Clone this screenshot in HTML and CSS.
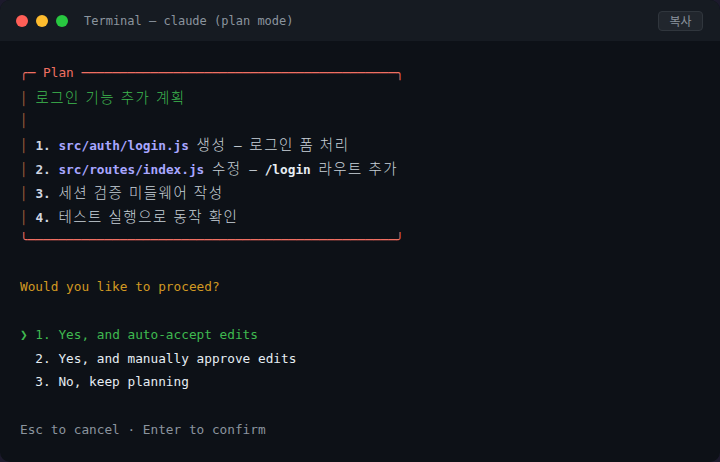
FILE: index.html
```html
<!DOCTYPE html>
<html lang="ko">
<head>
<meta charset="utf-8">
<title>Terminal — claude (plan mode)</title>
<link rel="stylesheet" href="styles.css">
</head>
<body>
<div class="window">
  <div class="titlebar">
    <div class="dots">
      <span class="dot red"></span>
      <span class="dot yellow"></span>
      <span class="dot green"></span>
    </div>
    <div class="title">Terminal — claude (plan mode)</div>
    <button class="copy">복사</button>
  </div>
  <div class="term">
    <div class="line box-edge">╭─ <span class="plan-label">Plan</span> ─────────────────────────────────────────╮</div>
    <div class="line"><span class="bar">│</span> <span class="ko heading">로그인 기능 추가 계획</span></div>
    <div class="line"><span class="bar">│</span></div>
    <div class="line"><span class="bar">│</span> <b class="num">1.</b> <b class="path">src/auth/login.js</b> <span class="ko">생성</span> — <span class="ko">로그인 폼 처리</span></div>
    <div class="line"><span class="bar">│</span> <b class="num">2.</b> <b class="path">src/routes/index.js</b> <span class="ko">수정</span> — <b class="route">/login</b> <span class="ko">라우트 추가</span></div>
    <div class="line"><span class="bar">│</span> <b class="num">3.</b> <span class="ko">세션 검증 미들웨어 작성</span></div>
    <div class="line"><span class="bar">│</span> <b class="num">4.</b> <span class="ko">테스트 실행으로 동작 확인</span></div>
    <div class="line box-edge">╰────────────────────────────────────────────────╯</div>
    <div class="line blank"></div>
    <div class="line question">Would you like to proceed?</div>
    <div class="line blank"></div>
    <div class="line option selected"><span class="caret">❯</span> 1. Yes, and auto-accept edits</div>
    <div class="line option">  2. Yes, and manually approve edits</div>
    <div class="line option">  3. No, keep planning</div>
    <div class="line blank"></div>
    <div class="line hint">Esc to cancel · Enter to confirm</div>
  </div>
</div>
</body>
</html>
```

FILE: styles.css
```css
html, body {
  margin: 0;
  padding: 0;
  background: #1c1a2c;
}

.window {
  width: 720px;
  height: 462px;
  border-radius: 10px;
  overflow: hidden;
  background: #0d1117;
  display: flex;
  flex-direction: column;
}

.titlebar {
  height: 41px;
  flex: none;
  background: #161b22;
  display: flex;
  align-items: center;
  padding: 0 17px 0 16px;
  box-sizing: border-box;
}

.dots {
  display: flex;
  gap: 8px;
}

.dot {
  width: 12px;
  height: 12px;
  border-radius: 50%;
  display: block;
}
.dot.red { background: #ff5f57; }
.dot.yellow { background: #febc2e; }
.dot.green { background: #28c840; }

.title {
  margin-left: 16px;
  font-family: "DejaVu Sans Mono", monospace;
  font-size: 12px;
  color: #8b949e;
}

.copy {
  margin-left: auto;
  height: 20px;
  width: 45px;
  padding: 0;
  border: 1px solid #30363d;
  border-radius: 4px;
  background: #21262d;
  color: #8b949e;
  font-family: "Noto Sans CJK KR", sans-serif;
  font-size: 12px;
  line-height: 18px;
}

.term {
  padding: 20px 20px 0 20px;
  font-family: "DejaVu Sans Mono", "Noto Sans CJK KR", monospace;
  font-size: 12.75px;
  line-height: 23.8px;
  color: #c9d1d9;
}

.line {
  height: 23.8px;
  white-space: pre;
}

.ko {
  font-family: "Noto Sans CJK KR", sans-serif;
  font-size: 14.5px;
  font-weight: 300;
  letter-spacing: 1.5px;
}

.box-edge {
  color: #ef6f62;
}

.plan-label {
  color: #ef6f62;
}

.bar {
  color: #a65e3a;
}

.heading {
  color: #3fb950;
}

.num {
  color: #d0d7e2;
  font-weight: bold;
}

.path {
  color: #a8a6ff;
  font-weight: bold;
}

.route {
  color: #e6edf3;
  font-weight: bold;
}

.question {
  color: #d29922;
}

.option {
  color: #e6edf3;
}

.selected {
  color: #3fb950;
}

.caret {
  color: #3fb950;
  font-weight: bold;
}

.hint {
  color: #8b949e;
}
```
